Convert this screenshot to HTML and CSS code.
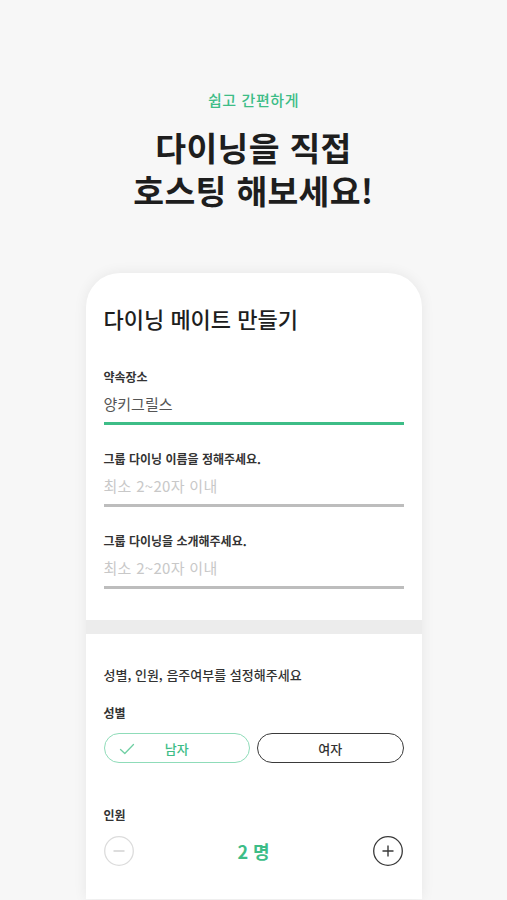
FILE: index.html
```html
<!DOCTYPE html>
<html lang="ko">
<head>
<meta charset="utf-8">
<link rel="stylesheet" href="styles.css">
</head>
<body>
<div class="page">
  <header class="hero">
    <p class="hero-sub">쉽고 간편하게</p>
    <h1 class="hero-title">다이닝을 직접<br>호스팅 해보세요!</h1>
  </header>
  <section class="card">
    <div class="card-top">
      <h2 class="card-title">다이닝 메이트 만들기</h2>
      <div class="field first">
        <div class="field-label">약속장소</div>
        <div class="field-input active"><span class="value">양키그릴스</span></div>
      </div>
      <div class="field">
        <div class="field-label">그룹 다이닝 이름을 정해주세요.</div>
        <div class="field-input"><span class="placeholder">최소 2~20자 이내</span></div>
      </div>
      <div class="field">
        <div class="field-label">그룹 다이닝을 소개해주세요.</div>
        <div class="field-input"><span class="placeholder">최소 2~20자 이내</span></div>
      </div>
    </div>
    <div class="band"></div>
    <div class="card-bottom">
      <div class="section-title">성별, 인원, 음주여부를 설정해주세요</div>
      <div class="sub-label">성별</div>
      <div class="gender">
        <button class="pill selected">
          <svg class="check" width="16" height="12" viewBox="0 0 16 12"><path d="M1.5 6.5 L5.8 10.5 L14.5 1.5" fill="none" stroke="#6fcfa3" stroke-width="1.3" stroke-linecap="round" stroke-linejoin="round"/></svg>
          남자
        </button>
        <button class="pill">여자</button>
      </div>
      <div class="sub-label people">인원</div>
      <div class="counter">
        <span class="circle minus"><svg width="30" height="30" viewBox="0 0 30 30"><circle cx="15" cy="15" r="14.3" fill="none" stroke="#dcdcdc" stroke-width="1.3"/><path d="M9.5 15 H20.5" stroke="#cfcfcf" stroke-width="1.4"/></svg></span>
        <span class="count">2 명</span>
        <span class="circle plus"><svg width="30" height="30" viewBox="0 0 30 30"><circle cx="15" cy="15" r="14.3" fill="none" stroke="#3a3a3a" stroke-width="1.3"/><path d="M9.5 15 H20.5 M15 9.5 V20.5" stroke="#3a3a3a" stroke-width="1.4"/></svg></span>
      </div>
    </div>
  </section>
</div>
</body>
</html>
```

FILE: styles.css
```css
* { box-sizing: border-box; }
html, body { margin: 0; padding: 0; }
body {
  background: #f7f7f7;
  font-family: "Noto Sans CJK KR", "Noto Sans", sans-serif;
  color: #222;
  height: 900px;
  overflow: hidden;
}
.page { display: flex; flex-direction: column; align-items: center; }
.hero { text-align: center; padding-top: 89px; }
.hero-sub {
  margin: 0;
  font-size: 15px;
  line-height: 21px;
  font-weight: 500;
  color: #3dbd87;
  letter-spacing: 0.6px;
}
.hero-title {
  margin: 15px 0 0;
  font-size: 33.5px;
  line-height: 43px;
  font-weight: 700;
  color: #1e1e1e;
  letter-spacing: 0.3px;
}
.card {
  margin-top: 62px;
  width: 336px;
  background: #fff;
  border-radius: 34px 34px 0 0;
  box-shadow: 0 0 14px rgba(0, 0, 0, 0.07);
  height: 626px;
}
.card-top { padding: 31px 18px 31px; }
.card-title {
  margin: 0;
  font-size: 22px;
  line-height: 29px;
  font-weight: 500;
  color: #1e1e1e;
}
.field { margin-top: 25px; }
.field.first { margin-top: 35px; }
.field-label {
  font-size: 12px;
  line-height: 18px;
  font-weight: 700;
  color: #333;
}
.field-input {
  margin-top: 7px;
  padding-bottom: 7px;
  border-bottom: 3px solid #bdbdbd;
  font-size: 15px;
  line-height: 22px;
}
.field-input.active { border-bottom-color: #3dbd87; }
.value { color: #555; }
.placeholder { color: #c8c8c8; letter-spacing: 0.3px; }
.band { height: 14px; background: #ececec; }
.card-bottom { padding: 32px 18px 0; }
.section-title {
  font-size: 13px;
  line-height: 18px;
  font-weight: 500;
  color: #333;
}
.sub-label {
  margin-top: 20px;
  font-size: 12px;
  line-height: 18px;
  font-weight: 700;
  color: #333;
}
.sub-label.people { margin-top: 43px; }
.gender {
  margin-top: 11px;
  display: grid;
  grid-template-columns: 1fr 1fr;
  gap: 7px;
}
.pill {
  position: relative;
  height: 30px;
  border-radius: 15px;
  background: #fff;
  border: 1.3px solid #3a3a3a;
  font-family: inherit;
  font-size: 13px;
  font-weight: 500;
  color: #333;
  padding: 0;
}
.pill.selected { border-color: #8fdcb9; color: #3dbd87; }
.check { position: absolute; left: 14px; top: 9px; }
.counter {
  margin-top: 12px;
  display: flex;
  align-items: center;
  justify-content: space-between;
}
.circle { display: block; width: 30px; height: 30px; }
.circle svg { display: block; }
.count {
  font-size: 18px;
  line-height: 24px;
  font-weight: 700;
  color: #3dbd87;
}
```
